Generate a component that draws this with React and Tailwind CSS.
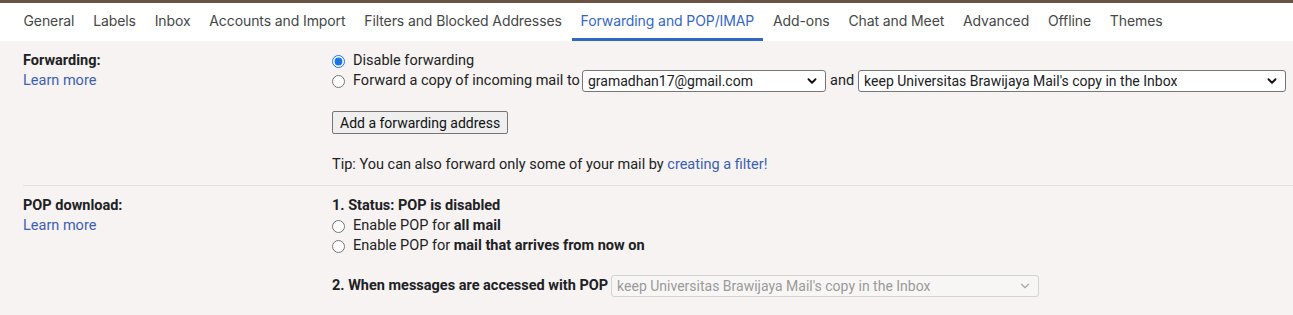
import { ChevronDown } from "lucide-react";

const tabs = [
  "General",
  "Labels",
  "Inbox",
  "Accounts and Import",
  "Filters and Blocked Addresses",
  "Forwarding and POP/IMAP",
  "Add-ons",
  "Chat and Meet",
  "Advanced",
  "Offline",
  "Themes",
];

const Select = ({ value, className = "", disabled = false }) => (
  <div
    className={`flex items-center justify-between h-[22px] rounded-[3px] border pl-[5px] pr-[6px] text-[14px] whitespace-nowrap ${
      disabled
        ? "border-[#d4d2d2] bg-[#f8f6f5] text-[#9a9a9a]"
        : "border-[#767676] bg-white text-[#202124]"
    } ${className}`}
  >
    <span className="truncate">{value}</span>
    <ChevronDown
      size={14}
      strokeWidth={disabled ? 2 : 3.2}
      className={`shrink-0 ${disabled ? "text-[#a8a8a8]" : "text-[#111]"}`}
    />
  </div>
);

const Radio = ({ checked = false }) => (
  <input
    type="radio"
    checked={checked}
    readOnly
    className="m-0 mr-[8px] h-[13px] w-[13px] shrink-0 accent-[#1a73e8]"
  />
);

const Section = ({ title, children }) => (
  <div className="flex px-[23px]">
    <div className="w-[309px] shrink-0">
      <div className="font-bold text-[#202124]">{title}</div>
      <a className="text-[#3c5fb3]">Learn more</a>
    </div>
    <div className="flex-1 whitespace-nowrap">{children}</div>
  </div>
);

export default function App() {
  return (
    <div
      className="w-[1293px] h-[315px] overflow-hidden bg-[#f6f3f2] text-[14.5px] leading-[20px] text-[#222]"
      style={{ fontFamily: "Roboto, 'Liberation Sans', sans-serif" }}
    >
      <div className="h-[3px] bg-[#6b5344]" />
      {/* Tabs */}
      <div
        className="flex gap-[1.8px] h-[38px] bg-white pl-[15px]"
        style={{ fontFamily: "Inter, 'Open Sans', sans-serif" }}
      >
        {tabs.map((t) => {
          const active = t === "Forwarding and POP/IMAP";
          return (
            <div
              key={t}
              className={`flex items-center whitespace-nowrap px-[8.5px] pt-[1px] text-[14px] tracking-[-0.1px] border-b-[3px] ${
                active
                  ? "text-[#3367c7] border-[#3367c7]"
                  : "text-[#444746] border-transparent"
              }`}
            >
              {t}
            </div>
          );
        })}
      </div>

      {/* Forwarding */}
      <div className="pt-[10px] pb-[10px]">
        <Section title="Forwarding:">
          <label className="flex items-center h-[20px]">
            <Radio checked />
            Disable forwarding
          </label>
          <div className="flex items-center h-[20px]">
            <Radio />
            <span className="w-[229px]">Forward a copy of incoming mail to</span>
            <Select value="gramadhan17@gmail.com" className="w-[244px]" />
            <span className="mx-[4px]">and</span>
            <Select
              value="keep Universitas Brawijaya Mail's copy in the Inbox"
              className="w-[428px]"
            />
          </div>
          <button className="mt-[20px] h-[23px] rounded-[2px] border border-[#767676] bg-[#efefef] px-[7px] text-[14px] text-[#111]">
            Add a forwarding address
          </button>
          <div className="mt-[21px] text-[#222]">
            Tip: You can also forward only some of your mail by{" "}
            <a className="text-[#3c5fb3]">creating a filter!</a>
          </div>
        </Section>
      </div>

      <div className="ml-[23px] h-px bg-[#e4e1e0]" />

      {/* POP download */}
      <div className="pt-[10px]">
        <Section title="POP download:">
          <div className="font-bold text-[#202124]">1. Status: POP is disabled</div>
          <label className="flex items-center h-[20px]">
            <Radio />
            Enable POP for&nbsp;<b className="text-[#202124]">all mail</b>
          </label>
          <label className="flex items-center h-[20px]">
            <Radio />
            Enable POP for&nbsp;
            <b className="text-[#202124]">mail that arrives from now on</b>
          </label>
          <div className="mt-[19px] flex items-center">
            <span className="font-bold text-[#202124]">
              2. When messages are accessed with POP
            </span>
            <Select
              disabled
              value="keep Universitas Brawijaya Mail's copy in the Inbox"
              className="ml-[3px] w-[428px]"
            />
          </div>
        </Section>
      </div>
    </div>
  );
}
